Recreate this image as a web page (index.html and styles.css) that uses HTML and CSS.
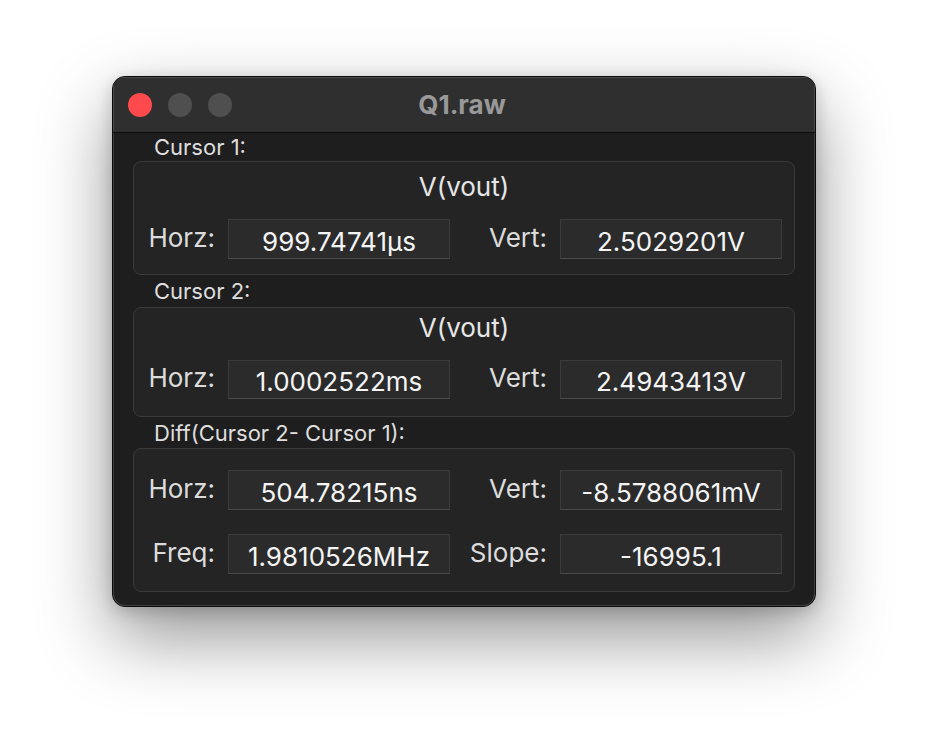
FILE: index.html
```html
<!DOCTYPE html>
<html>
<head>
<meta charset="utf-8">
<link rel="stylesheet" href="styles.css">
</head>
<body>
<div class="window">
  <div class="titlebar">
    <div class="lights">
      <span class="light close"></span>
      <span class="light"></span>
      <span class="light"></span>
    </div>
    <div class="title">Q1.raw</div>
  </div>
  <div class="content">
    <div class="section-label first">Cursor 1:</div>
    <div class="group g1">
      <div class="trace">V(vout)</div>
      <div class="grid">
        <div class="lbl">Horz:</div>
        <div class="field">999.74741µs</div>
        <div class="lbl">Vert:</div>
        <div class="field">2.5029201V</div>
      </div>
    </div>
    <div class="section-label second">Cursor 2:</div>
    <div class="group g2">
      <div class="trace">V(vout)</div>
      <div class="grid">
        <div class="lbl">Horz:</div>
        <div class="field">1.0002522ms</div>
        <div class="lbl">Vert:</div>
        <div class="field">2.4943413V</div>
      </div>
    </div>
    <div class="section-label third">Diff(Cursor 2- Cursor 1):</div>
    <div class="group g3">
      <div class="grid rows2">
        <div class="lbl">Horz:</div>
        <div class="field">504.78215ns</div>
        <div class="lbl">Vert:</div>
        <div class="field">-8.5788061mV</div>
        <div class="lbl">Freq:</div>
        <div class="field">1.9810526MHz</div>
        <div class="lbl">Slope:</div>
        <div class="field">-16995.1</div>
      </div>
    </div>
  </div>
</div>
</body>
</html>
```
FILE: styles.css
```css
html, body {
  margin: 0;
  padding: 0;
  background: #ffffff;
}
body {
  width: 928px;
  height: 756px;
  overflow: hidden;
  font-family: Inter, "Liberation Sans", sans-serif;
}
.window {
  margin: 76px 0 0 112px;
  width: 704px;
  height: 531px;
  box-sizing: border-box;
  border-radius: 13px;
  background: #1e1e1e;
  border: 1px solid #0a0a0a;
  box-shadow: inset 0 0 0 1px #4a4a4a, 0 30px 72px rgba(0,0,0,0.42), 0 4px 16px rgba(0,0,0,0.18);
  overflow: hidden;
  display: flex;
  flex-direction: column;
}
.titlebar {
  height: 55px;
  flex: none;
  background: #2f2f2f;
  border-bottom: 1px solid #0c0c0c;
  box-shadow: inset 0 1px 0 #4a4a4a, inset 1px 0 0 #4a4a4a, inset -1px 0 0 #4a4a4a;
  display: flex;
  align-items: center;
  position: relative;
}
.lights {
  display: flex;
  gap: 16px;
  padding-left: 15px;
  padding-top: 1px;
}
.light {
  width: 24px;
  height: 24px;
  border-radius: 50%;
  background: #4f4f4f;
}
.light.close {
  background: #fe4a4c;
}
.title {
  position: absolute;
  left: 0;
  right: 0;
  top: 0;
  bottom: 0;
  display: flex;
  align-items: center;
  justify-content: center;
  font-weight: 700;
  font-size: 26px;
  color: #999999;
  padding-right: 4px;
}
.content {
  flex: 1;
  padding: 0 20px 0 20px;
  display: flex;
  flex-direction: column;
  box-shadow: inset 1px 0 0 #3e3e3e, inset -1px 0 0 #3e3e3e, inset 0 -1px 0 #3e3e3e;
}
.section-label {
  font-size: 22px;
  color: #dedede;
  padding-left: 21px;
  display: flex;
  align-items: center;
}
.section-label.first { height: 28px; }
.section-label.second { height: 32px; }
.section-label.third { height: 31px; }
.group {
  background: #242424;
  border: 1px solid #3a3a3a;
  border-radius: 8px;
  box-sizing: border-box;
  display: flex;
  flex-direction: column;
}
.g1 { height: 114px; }
.g2 { height: 110px; }
.g3 { height: 144px; padding-top: 21px; }
.trace {
  font-size: 26px;
  color: #e6e6e6;
  text-align: center;
  height: 44px;
  display: flex;
  align-items: center;
  justify-content: center;
  padding-top: 2px;
}
.g2 .trace { height: 38px; padding-top: 0; }
.g1 .grid { margin-top: 11px; }
.g2 .grid { margin-top: 14px; }
.grid {
  display: grid;
  grid-template-columns: 80px 222px 84px 222px;
  column-gap: 13px;
  row-gap: 24px;
  padding-left: 1px;
  grid-auto-rows: 40px;
}
.g2 .grid { grid-auto-rows: 39px; }
.lbl {
  font-size: 26px;
  color: #dcdcdc;
  text-align: right;
  display: flex;
  align-items: center;
  justify-content: flex-end;
  padding-bottom: 4px;
  white-space: nowrap;
}
.field {
  background: #2b2b2b;
  border: 1px solid #3b3b3b;
  border-bottom-color: #4a4a4a;
  box-sizing: border-box;
  font-size: 26px;
  color: #f4f4f4;
  display: flex;
  align-items: center;
  justify-content: center;
  padding-top: 4px;
  white-space: nowrap;
}
```
